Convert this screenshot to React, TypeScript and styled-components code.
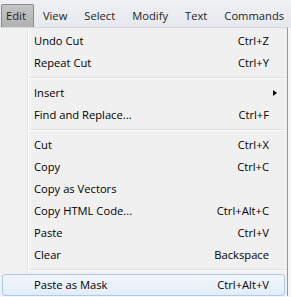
import React from 'react'
import styled, {createGlobalStyle} from 'styled-components'

const GlobalStyle = createGlobalStyle`
  html, body {
    margin: 0;
    padding: 0;
    background: #f7f7f7;
  }
  body {
    font-family: 'Open Sans', 'Noto Sans', sans-serif;
    font-size: 11.2px;
    color: #000;
  }
`

const Page = styled.div`
  width: 291px;
  height: 297px;
  overflow: hidden;
  background: #f7f7f7;
`

const MenuBar = styled.div`
  height: 28px;
  display: flex;
  align-items: flex-end;
  gap: 4px;
  padding: 0 0 1px 1px;
  box-sizing: border-box;
  background: linear-gradient(to bottom, #eef0f3 0%, #e6e9ed 100%);
`

const BarItem = styled.div<{$pressed?: boolean}>`
  height: 23px;
  box-sizing: border-box;
  display: flex;
  align-items: center;
  padding: 0 7px 1px 4px;
  border: 1px solid ${({$pressed}) => ($pressed ? '#8a8a8a' : 'transparent')};
  border-bottom: none;
  border-radius: 2px 2px 0 0;
  background: ${({$pressed}) => ($pressed ? 'linear-gradient(to bottom, #c4c4c4, #b2b2b2)' : 'transparent')};
  color: #1e1e1e;
  white-space: nowrap;
`

const Menu = styled.div`
  width: 288px;
  box-sizing: border-box;
  padding: 2px 0 0;
  border-right: 1px solid #979797;
  border-top: 1px solid #d7d7d7;
  margin-top: -1px;
  background: linear-gradient(
    to right,
    #f1f1f1 0 27px,
    #e2e3e3 27px 28px,
    #ffffff 28px 29px,
    #f0f0f0 29px
  );
`

const Item = styled.div<{$hover?: boolean}>`
  height: 22px;
  box-sizing: border-box;
  display: flex;
  align-items: center;
  padding: 0 15px 1px 31px;
  margin: 0 2px;
  border: 1px solid ${({$hover}) => ($hover ? '#a8caf0' : 'transparent')};
  border-radius: 3px;
  background: ${({$hover}) => ($hover ? 'linear-gradient(to bottom, #f1f6fd, #e3edfa)' : 'transparent')};
  white-space: nowrap;
`

const Label = styled.span`
  flex: 1;
`

const Shortcut = styled.span`
  text-align: right;
`

const Arrow = styled.span`
  width: 0;
  height: 0;
  margin-right: -8px;
  border-top: 3.5px solid transparent;
  border-bottom: 3.5px solid transparent;
  border-left: 4px solid #000;
`

const Separator = styled.div`
  height: 8px;
  margin-left: 29px;
  display: flex;
  flex-direction: column;
  justify-content: center;
  &::before {
    content: '';
    height: 1px;
    background: #e0e0e0;
  }
  &::after {
    content: '';
    height: 1px;
    background: #ffffff;
  }
`

type Entry = {label: string; shortcut?: string; submenu?: boolean; hover?: boolean} | 'sep'

const entries: Entry[] = [
  {label: 'Undo Cut', shortcut: 'Ctrl+Z'},
  {label: 'Repeat Cut', shortcut: 'Ctrl+Y'},
  'sep',
  {label: 'Insert', submenu: true},
  {label: 'Find and Replace...', shortcut: 'Ctrl+F'},
  'sep',
  {label: 'Cut', shortcut: 'Ctrl+X'},
  {label: 'Copy', shortcut: 'Ctrl+C'},
  {label: 'Copy as Vectors'},
  {label: 'Copy HTML Code...', shortcut: 'Ctrl+Alt+C'},
  {label: 'Paste', shortcut: 'Ctrl+V'},
  {label: 'Clear', shortcut: 'Backspace'},
  'sep',
  {label: 'Paste as Mask', shortcut: 'Ctrl+Alt+V', hover: true},
]

const barItems = ['Edit', 'View', 'Select', 'Modify', 'Text', 'Commands']

export default function App() {
  return (
    <Page>
      <GlobalStyle />
      <MenuBar>
        {barItems.map((name, i) => (
          <BarItem key={name} $pressed={i === 0}>
            {name}
          </BarItem>
        ))}
      </MenuBar>
      <Menu>
        {entries.map((e, i) =>
          e === 'sep' ? (
            <Separator key={i} />
          ) : (
            <Item key={i} $hover={e.hover}>
              <Label>{e.label}</Label>
              {e.shortcut && <Shortcut>{e.shortcut}</Shortcut>}
              {e.submenu && <Arrow />}
            </Item>
          ),
        )}
      </Menu>
    </Page>
  )
}
